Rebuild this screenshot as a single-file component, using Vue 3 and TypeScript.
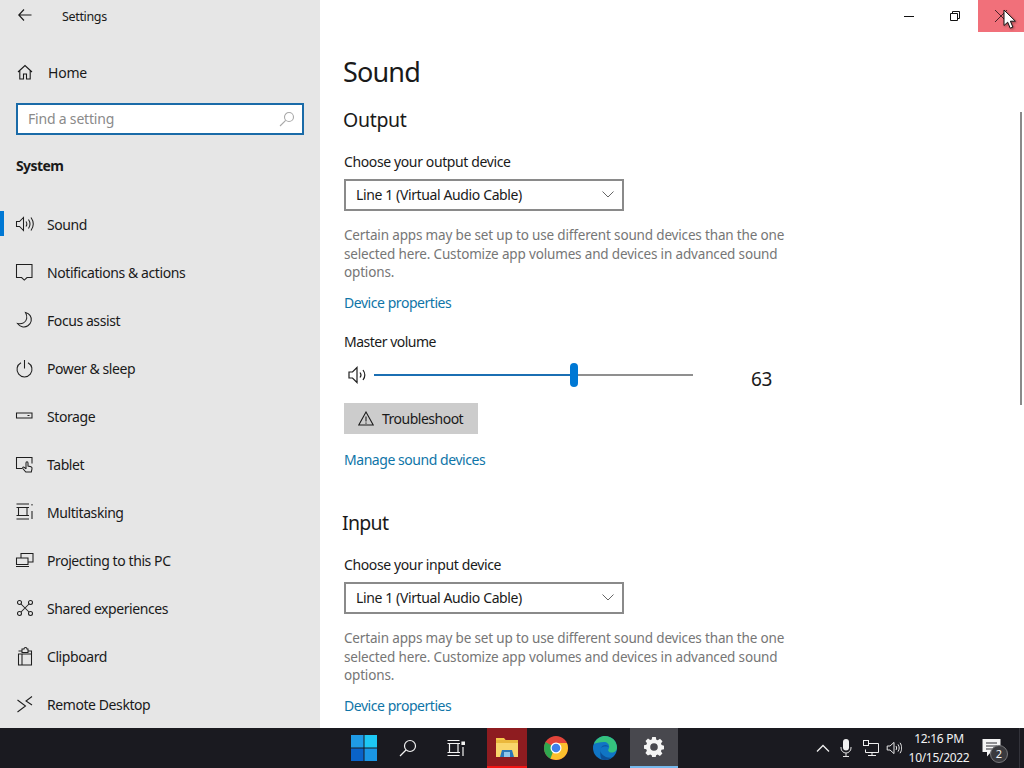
<script setup lang="ts">
interface NavItem { label: string; icon: string; active?: boolean }
const nav: NavItem[] = [
  { label: 'Sound', icon: 'sound', active: true },
  { label: 'Notifications & actions', icon: 'notif' },
  { label: 'Focus assist', icon: 'moon' },
  { label: 'Power & sleep', icon: 'power' },
  { label: 'Storage', icon: 'storage' },
  { label: 'Tablet', icon: 'tablet' },
  { label: 'Multitasking', icon: 'multi' },
  { label: 'Projecting to this PC', icon: 'project' },
  { label: 'Shared experiences', icon: 'shared' },
  { label: 'Clipboard', icon: 'clip' },
  { label: 'Remote Desktop', icon: 'remote' },
]
const paths: Record<string, string> = {
  sound: 'M1.500 7.500h3l4-4v13l-4-4h-3zM11 7.500c1 1.500 1 3.500 0 5M13.500 5.500c2 3 2 6 0 9M16 3.500c2.800 4 2.800 9 0 13',
  notif: 'M1.500 2.500h15.500v13h-5l-2.700 2.600-2.700-2.600H1.500z',
  moon: 'M10.500 2.500c4 1 6.500 4.500 5.700 8.500-.8 4-5 6.700-9 5.700-2-.5-3.500-1.500-4.700-3.200 4.500 1 8.500-1 9.200-5 .3-2-.2-4.300-1.200-6z',
  power: 'M6 4.800a7.500 7.500 0 1 0 7 0M9.500 2v8.500',
  storage: 'M1.500 7h15.500v5h-15.500zM12.500 9.500h2',
  tablet: 'M7 14.500H1.500v-11h15.500v6M11 9v6M11 9c0-1.600 2-1.600 2 0v3l3 .8c1 .3 1.200 1 1 2l-.7 3.200h-5.500l-3-3.500c-.6-1 .6-2 1.500-1.200l1.700 1.500',
  multi: 'M1.500 2h12.500M1.500 17h12.500M3.500 5.500h8.500v8H3.500zM1.500 5.500h2M1.500 13.500h2M12 5.500h2M12 13.500h2M17 9v8M17 2v1.500',
  project: 'M6 8V3.500h12V12h-5M1.500 8H13v6.500H1.500zM1 16.500h13',
  shared: 'M6 6l8 8M14 6l-8 8',
  clip: 'M3.500 5H7M13 5h3.500v6M7 8H3.500v11H7M7 8h9.500v11H7z M7 5V3h2a1.500 1.500 0 0 1 3 0h1v3.500H7z',
  remote: 'M2.500 6l8 6-8 6M17 2.500l-6 4.500 6 4',
}
</script>

<template>
  <div class="screen">
    <div class="window">
      <aside class="sidebar">
        <div class="titlerow">
          <svg class="back" width="14" height="12" viewBox="0 0 14 12" fill="none" stroke="#1a1a1a" stroke-width="1.150"><path d="M6 .5 .8 6 6 11.500M.8 6H13.500" /></svg>
          <span class="apptitle">Settings</span>
        </div>
        <div class="home">
          <svg width="16" height="16" viewBox="0 0 16 16" fill="none" stroke="#1a1a1a" stroke-width="1.100"><path d="M1 8 8 1.500 15 8M2.800 6.500V15h3.700v-5h3v5h3.700V6.500" /></svg>
          <span>Home</span>
        </div>
        <div class="search">
          <span class="placeholder">Find a setting</span>
          <svg width="16" height="16" viewBox="0 0 16 16" fill="none" stroke="#a8a8a8" stroke-width="1.100"><circle cx="10" cy="6" r="4.500" /><path d="M6.700 9.300 1 15" /></svg>
        </div>
        <div class="system">System</div>
        <nav class="nav">
          <div v-for="item in nav" :key="item.label" class="navitem" :class="{ active: item.active }">
            <svg width="20" height="20" viewBox="0 0 20 20" fill="none" stroke="#1f1f1f" stroke-width="1.050">
              <path :d="paths[item.icon]" />
              <template v-if="item.icon === 'shared'">
                <circle cx="4.500" cy="4.500" r="2" /><circle cx="15.500" cy="4.500" r="2" /><circle cx="4.500" cy="15.500" r="2" /><circle cx="15.500" cy="15.500" r="2" />
              </template>
            </svg>
            <span>{{ item.label }}</span>
          </div>
        </nav>
      </aside>

      <main class="content">
        <div class="controls">
          <span class="ctl"><svg width="12" height="12" viewBox="0 0 12 12" stroke="#111" fill="none"><path d="M1 6.500h10" /></svg></span>
          <span class="ctl"><svg width="12" height="12" viewBox="0 0 12 12" stroke="#111" fill="none"><path d="M1.500 3.500h7v7h-7zM3.500 3.500v-2h7v7h-2" /></svg></span>
          <span class="ctl close"><svg width="14" height="14" viewBox="0 0 14 14" stroke="#4a2228" fill="none"><path d="M1 1l12 12M13 1 1 13" /></svg></span>
        </div>
        <h1>Sound</h1>
        <h2>Output</h2>
        <div class="label first">Choose your output device</div>
        <div class="select">
          <span>Line 1 (Virtual Audio Cable)</span>
          <svg width="12" height="7" viewBox="0 0 12 7" fill="none" stroke="#666"><path d="M.5.5 6 6 11.500.5" /></svg>
        </div>
        <p class="desc">Certain apps may be set up to use different sound devices than the one selected here. Customize app volumes and devices in advanced sound options.</p>
        <div class="link dp">Device properties</div>
        <div class="label mv">Master volume</div>
        <div class="volrow">
          <svg width="20" height="20" viewBox="0 0 20 20" fill="none" stroke="#1f1f1f" stroke-width="1.200"><path d="M1 7h3.500l4.500-4.500v15L4.500 13H1zM12 7.500c1.200 1.500 1.200 3.500 0 5M15 5c2.200 3 2.200 7 0 10" /></svg>
          <div class="slider">
            <div class="fill" style="width: 62.7%"></div>
            <div class="thumb" style="left: 62.7%"></div>
          </div>
          <span class="volnum">63</span>
        </div>
        <div class="tsbtn">
          <svg width="16" height="15" viewBox="0 0 16 15" fill="none" stroke="#1a1a1a" stroke-width="1.050"><path d="M8 1 15.200 14H.8zM8 5.500v5M8 11.500v1.300" /></svg>
          <span>Troubleshoot</span>
        </div>
        <div class="link msd">Manage sound devices</div>
        <h2 class="input">Input</h2>
        <div class="label first">Choose your input device</div>
        <div class="select">
          <span>Line 1 (Virtual Audio Cable)</span>
          <svg width="12" height="7" viewBox="0 0 12 7" fill="none" stroke="#666"><path d="M.5.5 6 6 11.500.5" /></svg>
        </div>
        <p class="desc">Certain apps may be set up to use different sound devices than the one selected here. Customize app volumes and devices in advanced sound options.</p>
        <div class="link dp2">Device properties</div>
        <div class="scrollbar"></div>
      </main>
    </div>

    <footer class="taskbar">
      <div class="tb start">
        <svg width="28" height="28" viewBox="0 0 28 28">
          <rect x="1" y="1" width="12.500" height="12.500" fill="#1f9be6" />
          <rect x="14.500" y="1" width="12.500" height="12.500" fill="#1dc8f4" />
          <rect x="1" y="14.500" width="12.500" height="12.500" fill="#0a63c9" />
          <rect x="14.500" y="14.500" width="12.500" height="12.500" fill="#1a96e4" />
        </svg>
      </div>
      <div class="tb s2">
        <svg width="18" height="18" viewBox="0 0 18 18" fill="none" stroke="#f2f2f2" stroke-width="1.200"><circle cx="11" cy="7" r="5.500" /><path d="M7 11 1 17" /></svg>
      </div>
      <div class="tb s3">
        <svg width="18" height="18" viewBox="0 0 18 18" fill="none" stroke="#f2f2f2" stroke-width="1.200"><path d="M.5 1.500h12M.5 16.500h12M2.500 4.500h8.500v9H2.500zM.5 4.500h2M.5 13.500h2M11 4.500h2M11 13.500h2M16 8v9" /><path d="M15 3h2.500v2.500H15z" fill="#f2f2f2" /></svg>
      </div>
      <div class="tb explorer">
        <svg width="24" height="22" viewBox="0 0 24 22">
          <path d="M1 2h8l2 2.500h-10z" fill="#f5c84c" />
          <rect x="1" y="4" width="22" height="17" fill="#f9d66b" />
          <rect x="1" y="4" width="22" height="3" fill="#eab83c" />
          <path d="M7 14h10l2 7H5z" fill="#2b78b8" />
          <rect x="9" y="16" width="6" height="5" fill="#8fc7ea" />
        </svg>
      </div>
      <div class="tb chrome">
        <svg width="24" height="24" viewBox="0 0 24 24">
          <circle cx="12" cy="12" r="12" fill="#e3443a" />
          <path d="M12 12 1.600 6a12 12 0 0 0 5 16.700z" fill="#2fa84f" />
          <path d="M12 7h10.900A12 12 0 0 1 12 24l-5.500-1.200z" fill="#fbc02d" />
          <circle cx="12" cy="12" r="5.500" fill="#fff" />
          <circle cx="12" cy="12" r="4.300" fill="#3f80ea" />
        </svg>
      </div>
      <div class="tb edge">
        <svg width="24" height="24" viewBox="0 0 24 24">
          <circle cx="12" cy="12" r="12" fill="#1075c4" />
          <path d="M1 8C3 2.500 8 0 12 0c6.500 0 12 5 12 11.500 0 3.500-3 5.500-6 5-2-.3-3-1.300-2.800-2.500.2-1.200 1-1.500 1-3C16.200 8 14 6 11 6 6.500 6 3 7 1 8z" fill="#35c27e" />
          <path d="M7 13c0 5 5 9.500 12 8.500a12 12 0 0 1-8 2.500C6 23.500 8 17 7 13z" fill="#0c4f96" />
          <path d="M7.500 12.500c1-2.500 3-3.500 5-3.500 2 0 3 1 3 2-2.500-1-6.500-.5-8 1.500z" fill="#0c59a6" />
        </svg>
      </div>
      <div class="tb settings">
        <svg width="20" height="20" viewBox="0 0 20 20">
          <path fill="#f4f4f4" fill-rule="evenodd" d="M8.200 0h3.600l.5 2.700 1.500.6L16 1.800l2.500 2.500L17 6.600l.6 1.500 2.400.6v3.600l-2.500.5-.6 1.500 1.500 2.300-2.500 2.500-2.300-1.500-1.500.6-.5 2.500H8.200l-.5-2.500-1.500-.6L3.900 18.500 1.400 16l1.500-2.300-.6-1.500L0 11.700V8.300l2.400-.6.600-1.500L1.500 4 4 1.500l2.200 1.500 1.500-.6zM10 6.200a3.800 3.800 0 1 0 0 7.600 3.800 3.800 0 0 0 0-7.600z" />
        </svg>
      </div>

      <div class="tray">
        <svg class="t-chev" width="14" height="8" viewBox="0 0 14 8" fill="none" stroke="#eee" stroke-width="1.300"><path d="M1 7.500 7 1.500l6 6" /></svg>
        <svg class="t-mic" width="12" height="18" viewBox="0 0 12 18"><rect x="3" y="0" width="6" height="11.500" rx="3" fill="#f2f2f2" /><path d="M1 8v1a5 5 0 0 0 10 0V8M6 14v3M3 17.500h6" fill="none" stroke="#e4e4e4" /></svg>
        <svg class="t-net" width="16" height="16" viewBox="0 0 16 16" fill="none" stroke="#eee"><path d="M2.500 3.500h13v9h-13v-3M9 12.500v3M5 15.500h8" /><rect x=".5" y=".5" width="5" height="5" fill="#1a1a20" /></svg>
        <svg class="t-vol" width="16" height="16" viewBox="0 0 20 20" fill="none" stroke="#eee" stroke-width="1.200"><path d="M1.500 7.500h3.500l5-4.500v14l-5-4.500H1.500zM12.500 7.500c1 1.500 1 3.500 0 5M15 5.500c2 3 2 6 0 9M17.500 3.500c2.800 4 2.800 9 0 13" /></svg>
        <div class="clock"><span>12:16 PM</span><span>10/15/2022</span></div>
        <div class="notif">
          <svg width="20" height="18" viewBox="0 0 20 18"><path fill="#f4f4f4" fill-rule="evenodd" d="M.5 0h18v13H9l-4 4.500V13H.5z" /><path d="M4 4h11M4 7h11M4 10h7" stroke="#2a2a30" /></svg>
          <span class="badge">2</span>
        </div>
        <div class="edgeline"></div>
      </div>
    </footer>

    <svg class="cursor" width="14" height="21" viewBox="0 0 14 21"><path d="M1 1v15.500l3.700-3.300 2.500 6 2.700-1.100-2.500-5.900h5z" fill="#fff" stroke="#111" stroke-width="1" /></svg>
  </div>
</template>

<style scoped>
.screen { position: relative; width: 1024px; height: 768px; overflow: hidden; display: flex; flex-direction: column; font-family: "Noto Sans", "Open Sans", sans-serif; font-size: 14px; letter-spacing: -0.38px; color: #1a1a1a; background: #fff; }
.window { display: flex; height: 728px; overflow: hidden; }
.sidebar { width: 320px; flex: none; background: #e6e6e6; overflow: hidden; }
.titlerow { display: flex; align-items: center; height: 32px; padding-left: 18px; }
.back { margin-right: 30px; margin-top: -2px; }
.apptitle { font-size: 12.500px; letter-spacing: -0.35px; }
.home { display: flex; align-items: center; gap: 15px; height: 48px; margin-top: 16px; padding-left: 17px; font-size: 14px; letter-spacing: -0.2px; }
.search { display: flex; align-items: center; justify-content: space-between; box-sizing: border-box; width: 288px; height: 32px; margin: 7px 0 0 16px; padding: 0 7px 0 10px; background: #fff; border: 2px solid #1a6ba8; }
.placeholder { color: #8a8a8a; font-size: 14px; letter-spacing: -0.2px; position: relative; top: -1px; }
.system { margin: 19px 0 0 16px; height: 24px; line-height: 24px; font-weight: 700; font-size: 14px; letter-spacing: -0.6px; }
.nav { margin-top: 22px; }
.navitem { position: relative; display: flex; align-items: center; gap: 12px; height: 48px; padding-left: 15px; font-size: 14px; letter-spacing: -0.42px; flex: none; }
.navitem.active::before { content: ""; position: absolute; left: 0; top: 11px; width: 4px; height: 25px; background: #0078d4; }
.content { position: relative; flex: 1; padding-left: 24px; overflow: hidden; }
.controls { position: absolute; top: 0; right: 0; display: flex; }
.ctl { display: flex; align-items: center; justify-content: center; width: 46px; height: 32px; }
.close { background: #f1707a; }
h1 { margin: 50px 0 0 -1px; height: 44px; line-height: 44px; font-size: 27px; font-weight: 400; letter-spacing: -0.85px; }
h2 { margin: 12px 0 0 -1px; height: 28px; line-height: 28px; font-size: 19.500px; font-weight: 400; letter-spacing: -0.3px; }
.label { height: 20px; line-height: 20px; }
.label.first { margin-top: 18px; }
.select { display: flex; align-items: center; justify-content: space-between; box-sizing: border-box; width: 280px; height: 32px; margin-top: 7px; padding: 0 8px 1px 10px; border: 2px solid #8a8a8a; }
.desc { width: 452px; margin: 15px 0 0; line-height: 18.500px; color: #767676; font-size: 13.500px; letter-spacing: -0.16px; }
.link { color: #0f75a8; height: 20px; line-height: 20px; letter-spacing: -0.45px; }
.dp { margin-top: 11.500px; }
.dp2 { margin-top: 11px; }
.mv { margin-top: 19px; letter-spacing: -0.5px; }
.volrow { position: relative; display: flex; align-items: center; height: 32px; margin-top: 7px; margin-left: 4px; }
.slider { position: relative; width: 319px; height: 2px; margin-left: 6px; background: #8f8f8f; }
.fill { height: 2px; background: #1b6fb3; }
.thumb { position: absolute; top: -11px; width: 8px; height: 24px; margin-left: -4px; border-radius: 4px; background: #0078d4; }
.volnum { position: absolute; left: 403px; top: 7px; font-size: 19px; line-height: 26px; }
.tsbtn { display: flex; align-items: center; gap: 8px; width: 134px; height: 31px; box-sizing: border-box; margin-top: 12px; padding-left: 14px; background: #cccccc; letter-spacing: -0.5px; }
.msd { margin-top: 16px; }
h2.input { margin-top: 39px; margin-left: -2px; letter-spacing: -0.7px; }
.scrollbar { position: absolute; right: 2px; top: 112px; width: 2px; height: 293px; background: #8a8a8a; }
.taskbar { position: relative; display: flex; height: 40px; padding-left: 342px; background: #1a1a20; }
.tb { display: flex; align-items: center; justify-content: center; height: 40px; width: 44px; flex: none; box-sizing: border-box; }
.s2 { width: 44px; }
.s3 { width: 52px; }
.explorer { width: 40px; margin-left: 5px; background: #8e1c20; border-bottom: 2px solid #ef1515; }
.chrome { width: 48px; margin-left: 5px; }
.edge { width: 48px; margin-left: 1px; }
.settings { width: 48px; margin-left: 1px; background: #48484e; border-bottom: 2px solid #76b9ed; }
.tray { position: absolute; left: 0; top: 0; width: 1024px; height: 40px; pointer-events: none; }
.tray svg { position: absolute; }
.t-chev { left: 816px; top: 16px; }
.t-mic { left: 840px; top: 11px; }
.t-net { left: 863px; top: 12px; }
.t-vol { left: 886px; top: 12px; }
.clock { position: absolute; left: 900px; top: 1px; width: 78px; display: flex; flex-direction: column; align-items: center; color: #f2f2f2; font-size: 12px; line-height: 19px; letter-spacing: -0.3px; }
.notif { position: absolute; left: 982px; top: 11px; width: 30px; height: 26px; }
.badge { position: absolute; left: 8px; top: 6px; width: 18px; height: 18px; box-sizing: border-box; border-radius: 50%; background: #3a3a3e; border: 1.500px solid #77777a; color: #f4f4f4; font-size: 11px; line-height: 15px; text-align: center; letter-spacing: 0; }
.edgeline { position: absolute; left: 1019px; top: 0; width: 1px; height: 40px; background: #33333a; }
.cursor { position: absolute; left: 1003px; top: 9px; filter: drop-shadow(1px 1px 1px rgba(0,0,0,.35)); }
</style>
